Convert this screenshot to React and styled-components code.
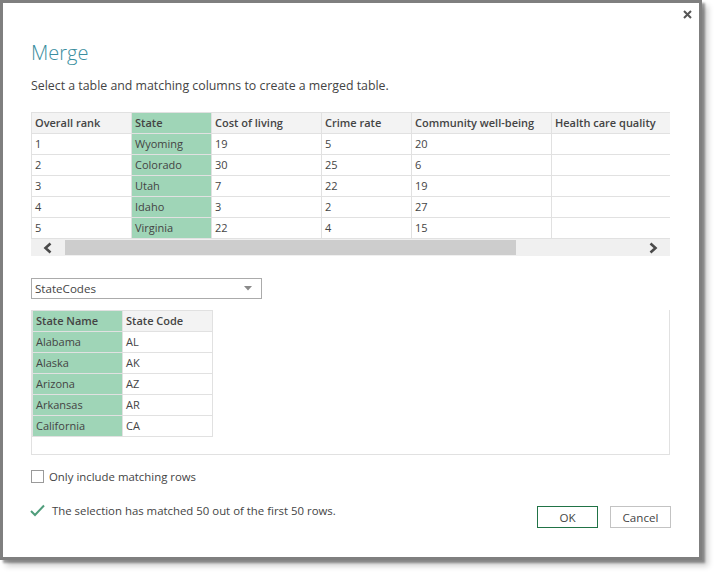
import React from 'react'
import styled, { createGlobalStyle } from 'styled-components'

const GlobalStyle = createGlobalStyle`
  html, body {
    margin: 0;
    padding: 0;
    background: #ffffff;
  }
  body {
    font-family: "Segoe UI", "Open Sans", "Noto Sans", sans-serif;
    color: #444444;
  }
`

const Page = styled.div`
  width: 717px;
  height: 574px;
  background: #fff;
`

const Window = styled.div`
  width: 702px;
  height: 560px;
  box-sizing: border-box;
  border: 3px solid #7f7f7f;
  background: #fff;
  box-shadow: 3px 3px 2px rgba(0, 0, 0, 0.35), 6px 6px 6px rgba(0, 0, 0, 0.2);
  display: flex;
  flex-direction: column;
  padding: 0 28px 0 28px;
`

const TopBar = styled.div`
  height: 28px;
  display: flex;
  justify-content: flex-end;
  align-items: flex-start;
  margin-right: -21px;
  padding-top: 7px;
  box-sizing: border-box;
`

const Title = styled.h1`
  margin: 8px 0 0;
  font-size: 20px;
  font-weight: 300;
  color: #3a8ea0;
  line-height: 28px;
  height: 28px;
`

const Subtitle = styled.p`
  margin: 10px 0 0;
  font-size: 12.35px;
  line-height: 18px;
  color: #444;
`

const Grid = styled.table`
  border-collapse: collapse;
  table-layout: fixed;
  width: ${p => p.$width}px;
  font-size: 11px;
  color: #444;
`

const Cell = styled.td`
  height: 20px;
  padding: 0 0 0 3px;
  border: 1px solid #e1e1e1;
  background: ${p => (p.$match ? '#9fd5b7' : '#ffffff')};
  white-space: nowrap;
  overflow: hidden;
  line-height: 20px;
  box-sizing: border-box;
`

const Head = styled(Cell).attrs({ as: 'th' })`
  text-align: left;
  font-weight: 600;
  background: ${p => (p.$match ? '#9fd5b7' : '#f3f3f3')};
`

const TableOne = styled.div`
  margin-top: 17px;
  width: 639px;
  overflow: hidden;
`

const Scrollbar = styled.div`
  height: 17px;
  background: #f0f0f0;
  display: flex;
  align-items: center;
`

const ArrowBox = styled.div`
  width: 34px;
  height: 17px;
  display: flex;
  align-items: center;
  justify-content: center;
`

const Thumb = styled.div`
  width: 451px;
  height: 15px;
  background: #cdcdcd;
`

const Track = styled.div`
  flex: 1;
`

const Select = styled.div`
  margin-top: 22px;
  width: 231px;
  height: 21px;
  box-sizing: border-box;
  border: 1px solid #ababab;
  display: flex;
  align-items: center;
  justify-content: space-between;
  padding: 0 9px 0 3px;
  font-size: 11.6px;
  color: #444;
`

const Panel = styled.div`
  margin-top: 11px;
  width: 639px;
  height: 145px;
  box-sizing: border-box;
  border: 1px solid #e1e1e1;
  border-top: none;
`

const CheckRow = styled.label`
  margin-top: 14px;
  display: flex;
  align-items: center;
  gap: 5px;
  font-size: 11.4px;
  color: #444;
  height: 14px;
`

const Box = styled.span`
  width: 11px;
  height: 11px;
  border: 1px solid #9a9a9a;
  background: #fff;
`

const Footer = styled.div`
  margin-top: 23px;
  width: 640px;
  display: flex;
  align-items: center;
`

const Status = styled.div`
  flex: 1;
  display: flex;
  align-items: center;
  gap: 7px;
  font-size: 11.4px;
  color: #444;
  margin-top: -13px;
  margin-left: -1px;
`

const Button = styled.button`
  width: 61px;
  height: 22px;
  margin-left: ${p => (p.$gap ? '12px' : '0')};
  background: #fff;
  border: 1px solid ${p => (p.$primary ? '#217346' : '#c3c3c3')};
  font-family: inherit;
  font-size: 11.6px;
  color: #444;
  padding: 0;
`

const Chevron = ({ dir }) => (
  <svg width="10" height="12" viewBox="0 0 10 12">
    <polyline
      points={dir === 'left' ? '7.5,1.5 2.5,6 7.5,10.5' : '2.5,1.5 7.5,6 2.5,10.5'}
      fill="none"
      stroke="#4a4a4a"
      strokeWidth="2.6"
    />
  </svg>
)

const rankings = [
  ['1', 'Wyoming', '19', '5', '20', ''],
  ['2', 'Colorado', '30', '25', '6', ''],
  ['3', 'Utah', '7', '22', '19', ''],
  ['4', 'Idaho', '3', '2', '27', ''],
  ['5', 'Virginia', '22', '4', '15', ''],
]

const codes = [
  ['Alabama', 'AL'],
  ['Alaska', 'AK'],
  ['Arizona', 'AZ'],
  ['Arkansas', 'AR'],
  ['California', 'CA'],
]

const rankCols = ['Overall rank', 'State', 'Cost of living', 'Crime rate', 'Community well-being', 'Health care quality']
const rankWidths = [100, 80, 110, 90, 140, 119]

export default function App() {
  return (
    <Page>
      <GlobalStyle />
      <Window>
        <TopBar>
          <svg width="9" height="9" viewBox="0 0 9 9">
            <path d="M1 1 L8 8 M8 1 L1 8" stroke="#555" strokeWidth="2" />
          </svg>
        </TopBar>
        <Title>Merge</Title>
        <Subtitle>Select a table and matching columns to create a merged table.</Subtitle>

        <TableOne>
          <Grid $width={639}>
            <colgroup>
              {rankWidths.map((w, i) => <col key={i} style={{ width: w }} />)}
            </colgroup>
            <thead>
              <tr>
                {rankCols.map((c, i) => <Head key={c} $match={i === 1}>{c}</Head>)}
              </tr>
            </thead>
            <tbody>
              {rankings.map(r => (
                <tr key={r[0]}>
                  {r.map((v, i) => <Cell key={i} $match={i === 1}>{v}</Cell>)}
                </tr>
              ))}
            </tbody>
          </Grid>
          <Scrollbar>
            <ArrowBox><Chevron dir="left" /></ArrowBox>
            <Thumb />
            <Track />
            <ArrowBox><Chevron dir="right" /></ArrowBox>
          </Scrollbar>
        </TableOne>

        <Select>
          <span>StateCodes</span>
          <svg width="8" height="5" viewBox="0 0 8 5">
            <path d="M0 0 L8 0 L4 4.5 Z" fill="#8a8a8a" />
          </svg>
        </Select>

        <Panel>
          <Grid $width={180}>
            <colgroup>
              <col style={{ width: 90 }} />
              <col style={{ width: 90 }} />
            </colgroup>
            <thead>
              <tr>
                <Head $match>State Name</Head>
                <Head>State Code</Head>
              </tr>
            </thead>
            <tbody>
              {codes.map(r => (
                <tr key={r[1]}>
                  <Cell $match>{r[0]}</Cell>
                  <Cell>{r[1]}</Cell>
                </tr>
              ))}
            </tbody>
          </Grid>
        </Panel>

        <CheckRow>
          <Box />
          Only include matching rows
        </CheckRow>

        <Footer>
          <Status>
            <svg width="15" height="13" viewBox="0 0 15 13">
              <polyline points="1,7 5,11 14,1.5" fill="none" stroke="#4f9d7b" strokeWidth="2" />
            </svg>
            The selection has matched 50 out of the first 50 rows.
          </Status>
          <Button $primary>OK</Button>
          <Button $gap>Cancel</Button>
        </Footer>
      </Window>
    </Page>
  )
}
